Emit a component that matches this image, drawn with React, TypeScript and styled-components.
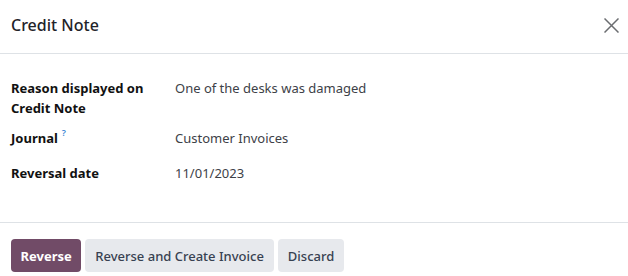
import React from "react";
import styled, { createGlobalStyle } from "styled-components";

const Global = createGlobalStyle`
  html, body { margin: 0; padding: 0; background: #fff; }
  body { font-family: "Noto Sans", "Open Sans", sans-serif; color: #212529; }
  * { box-sizing: border-box; }
`;

const Dialog = styled.div`
  width: 628px;
  height: 276px;
  display: flex;
  flex-direction: column;
  background: #fff;
`;

const Header = styled.header`
  height: 54px;
  display: flex;
  align-items: center;
  justify-content: space-between;
  padding: 0 8px 3px 11px;
  border-bottom: 1px solid #dee2e6;
`;

const Title = styled.h4`
  margin: 0;
  font-size: 16px;
  font-weight: 500;
  color: #1f2329;
`;

const Close = styled.button`
  width: 18px;
  height: 18px;
  border: 0;
  background: transparent;
  padding: 0;
  display: flex;
  align-items: center;
  justify-content: center;
  color: #6b6d70;
`;

const Body = styled.main`
  height: 169px;
  padding: 24px 11px 0 11px;
  border-bottom: 1px solid #dee2e6;
`;

const Field = styled.div<{ $gap: number }>`
  display: grid;
  grid-template-columns: 164px 1fr;
  margin-bottom: ${(p) => p.$gap}px;
`;

const Label = styled.div`
  font-size: 13px;
  font-weight: 700;
  line-height: 20px;
  color: #111;
  width: 140px;
`;

const Help = styled.sup`
  font-size: 9px;
  line-height: 0;
  color: #3a86d4;
  font-weight: 600;
  margin-left: 4px;
  position: relative;
  top: -2px;
`;

const Value = styled.div`
  font-size: 13px;
  line-height: 20px;
  color: #3d4147;
`;

const Footer = styled.footer`
  flex: 1;
  display: flex;
  align-items: flex-start;
  gap: 4px;
  padding: 16px 11px 0;
`;

const Button = styled.button<{ $primary?: boolean }>`
  height: 33px;
  padding: 0 ${(p) => (p.$primary ? 9.5 : 10)}px;
  border: 0;
  border-radius: 4px;
  font-family: inherit;
  font-size: 13px;
  font-weight: ${(p) => (p.$primary ? 700 : 500)};
  background: ${(p) => (p.$primary ? "#714b67" : "#e7e9ed")};
  color: ${(p) => (p.$primary ? "#fff" : "#374151")};
`;

export default function App() {
  return (
    <>
      <Global />
      <Dialog>
        <Header>
          <Title>Credit Note</Title>
          <Close aria-label="Close">
            <svg width="15" height="15" viewBox="0 0 15 15">
              <path d="M0.5 0.5 L14.5 14.5 M14.5 0.5 L0.5 14.5" stroke="currentColor" strokeWidth="1.5" fill="none" />
            </svg>
          </Close>
        </Header>
        <Body>
          <Field $gap={10}>
            <Label>Reason displayed on Credit Note</Label>
            <Value>One of the desks was damaged</Value>
          </Field>
          <Field $gap={15}>
            <Label>
              Journal<Help>?</Help>
            </Label>
            <Value>Customer Invoices</Value>
          </Field>
          <Field $gap={0}>
            <Label>Reversal date</Label>
            <Value>11/01/2023</Value>
          </Field>
        </Body>
        <Footer>
          <Button $primary>Reverse</Button>
          <Button>Reverse and Create Invoice</Button>
          <Button>Discard</Button>
        </Footer>
      </Dialog>
    </>
  );
}
